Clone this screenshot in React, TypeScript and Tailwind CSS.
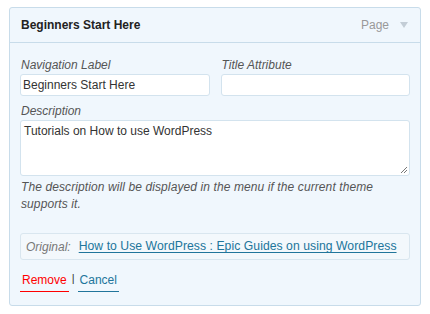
export default function App() {
  return (
    <div className="w-[430px] h-[314px] bg-white pt-[7px] pl-[9px] font-['Liberation_Sans',Arial,sans-serif]">
      <div className="w-[412px] h-[299px] rounded-[3px] border border-[#c8dcea] bg-[#f0f7fd]">
        {/* Header */}
        <div className="h-[35px] flex items-center justify-between pl-[11px] pr-[12px] border-b border-[#c8dcea]">
          <span className="text-[12px] font-bold text-[#222]">Beginners Start Here</span>
          <div className="flex items-center gap-[11px]">
            <span className="text-[12px] text-[#999]">Page</span>
            <svg width="8" height="6" viewBox="0 0 8 6">
              <path d="M0 0 L8 0 L4 6 Z" fill="#c3cdd6" />
            </svg>
          </div>
        </div>

        {/* Body */}
        <div className="px-[10px] pt-[14px]">
          <div className="grid grid-cols-2 gap-[11px]">
            <div>
              <div className="text-[12px] italic text-[#555] leading-[16px] pl-[1px]">Navigation Label</div>
              <div className="mt-[1px] h-[22px] rounded-[3px] border border-[#d3e3ee] bg-white px-[2px] text-[12px] leading-[20px] text-[#333]">
                Beginners Start Here
              </div>
            </div>
            <div>
              <div className="text-[12px] italic text-[#555] leading-[16px] pl-[1px]">Title Attribute</div>
              <div className="mt-[1px] h-[22px] rounded-[3px] border border-[#d3e3ee] bg-white" />
            </div>
          </div>

          <div className="mt-[7px] text-[12px] italic text-[#555] leading-[16px] pl-[1px]">Description</div>
          <div className="relative mt-[1px] h-[56px] rounded-[3px] border border-[#d3e3ee] bg-white px-[3px] pt-[1px] text-[12px] leading-[18px] text-[#333]">
            Tutorials on How to use WordPress
            <svg className="absolute right-[2px] bottom-[2px]" width="7" height="7" viewBox="0 0 7 7">
              <path d="M7 1 L1 7 M7 4 L4 7" stroke="#777" strokeWidth="1" />
            </svg>
          </div>
          <p className="mt-[3px] text-[12px] tracking-[0.1px] italic text-[#555] leading-[17px] pl-[1px]">
            The description will be displayed in the menu if the current theme supports it.
          </p>

          <div className="mt-[20px] h-[27px] rounded-[3px] border border-[#d9e6ef] bg-[#f3f8fc] flex items-center px-[5px] text-[12px] whitespace-nowrap">
            <span className="italic text-[#777]">Original:</span>
            <a className="ml-[8px] text-[12.2px] tracking-[0.05px] text-[#21759b] underline underline-offset-2">
              How to Use WordPress : Epic Guides on using WordPress
            </a>
          </div>

          <div className="mt-[12px] flex items-start text-[12px] leading-[16px]">
            <a className="text-[#f00] border-b border-[#f00] pb-[3px] px-[2px]">Remove</a>
            <span className="mx-[3px] text-[#333] text-[11px] leading-[12px]">|</span>
            <a className="text-[#21759b] border-b border-[#21759b] pb-[3px] px-[2px]">Cancel</a>
          </div>
        </div>
      </div>
    </div>
  );
}
